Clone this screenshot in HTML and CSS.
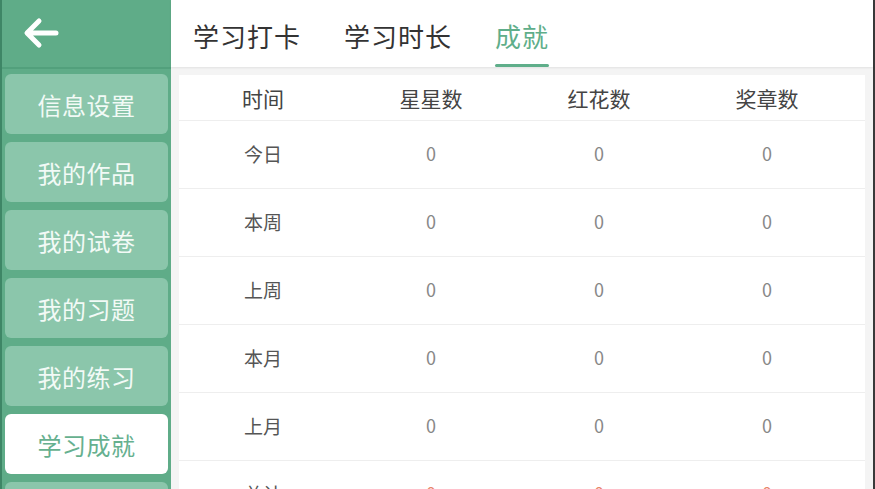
FILE: index.html
```html
<!DOCTYPE html>
<html lang="zh">
<head>
<meta charset="utf-8">
<link rel="stylesheet" href="styles.css">
</head>
<body>
<div class="app">
  <aside class="side">
    <div class="side-head">
      <svg class="back" width="38" height="32" viewBox="0 0 38 32"><path d="M34 16H6M17 4L5 16l12 12" fill="none" stroke="#fff" stroke-width="5" stroke-linecap="round" stroke-linejoin="round"/></svg>
    </div>
    <nav class="menu">
      <div class="item">信息设置</div>
      <div class="item">我的作品</div>
      <div class="item">我的试卷</div>
      <div class="item">我的习题</div>
      <div class="item">我的练习</div>
      <div class="item active">学习成就</div>
      <div class="item"></div>
    </nav>
  </aside>
  <main class="main">
    <div class="tabs">
      <div class="tab">学习打卡</div>
      <div class="tab">学习时长</div>
      <div class="tab on">成就</div>
    </div>
    <div class="card">
      <div class="row head"><span>时间</span><span>星星数</span><span>红花数</span><span>奖章数</span></div>
      <div class="row"><span class="lbl">今日</span><span>0</span><span>0</span><span>0</span></div>
      <div class="row"><span class="lbl">本周</span><span>0</span><span>0</span><span>0</span></div>
      <div class="row"><span class="lbl">上周</span><span>0</span><span>0</span><span>0</span></div>
      <div class="row"><span class="lbl">本月</span><span>0</span><span>0</span><span>0</span></div>
      <div class="row"><span class="lbl">上月</span><span>0</span><span>0</span><span>0</span></div>
      <div class="row total"><span class="lbl">总计</span><span>0</span><span>0</span><span>0</span></div>
    </div>
  </main>
</div>
</body>
</html>
```
FILE: styles.css
```css
* { box-sizing: border-box; }
html, body { margin: 0; padding: 0; }
body {
  width: 875px; height: 489px; overflow: hidden;
  font-family: "Noto Sans CJK SC", "Noto Sans", sans-serif;
  background: #f4f4f4;
}
.app { display: flex; height: 489px; border-right: 2px solid #3a3a3a; }
.side {
  width: 171px; flex: none; background: #5fac88;
  border-left: 2px solid #3e8666;
  display: flex; flex-direction: column;
}
.side-head {
  height: 69px; flex: none; display: flex; align-items: center;
  padding-left: 20px; border-bottom: 2px solid #52a07c;
}
.back { display: block; margin-top: -2px; }
.menu { display: flex; flex-direction: column; gap: 8px; padding: 5px 3px 0 3px; }
.item {
  height: 60px; flex: none; border-radius: 6px; background: #8bc6ab;
  color: #f2faf6; font-size: 24px; display: flex; align-items: center; justify-content: center;
  letter-spacing: 0.5px;
}
.item.active { background: #fff; color: #66b08f; }
.main { flex: 1; display: flex; flex-direction: column; }
.tabs {
  height: 67px; flex: none; background: #fff; display: flex; align-items: stretch;
  padding-left: 22px; gap: 43px;
  box-shadow: 0 1px 2px rgba(0,0,0,0.08);
  position: relative; z-index: 1;
}
.tab {
  font-size: 26px; color: #333; display: flex; align-items: center; padding-top: 3px;
  position: relative; letter-spacing: 1px;
}
.tab.on { color: #5fae8a; }
.tab.on::after {
  content: ""; position: absolute; left: 0; right: 0; bottom: 0; height: 3px;
  border-radius: 2px; background: #5fae8a;
}
.card { margin: 8px 8px 0 8px; background: #fff; flex: 1; }
.row {
  display: grid; grid-template-columns: repeat(4, 168px);
  height: 68px; align-items: center; border-top: 1px solid #eeeeee;
  font-size: 18px; color: #888; padding-bottom: 3px;
}
.row span { text-align: center; }
.row.head { height: 45px; border-top: none; font-size: 21px; color: #444; padding-bottom: 0; }
.row .lbl { color: #555; font-size: 19px; }
.row.total span { color: #e8866b; }
.row.total .lbl { color: #555; }
```
